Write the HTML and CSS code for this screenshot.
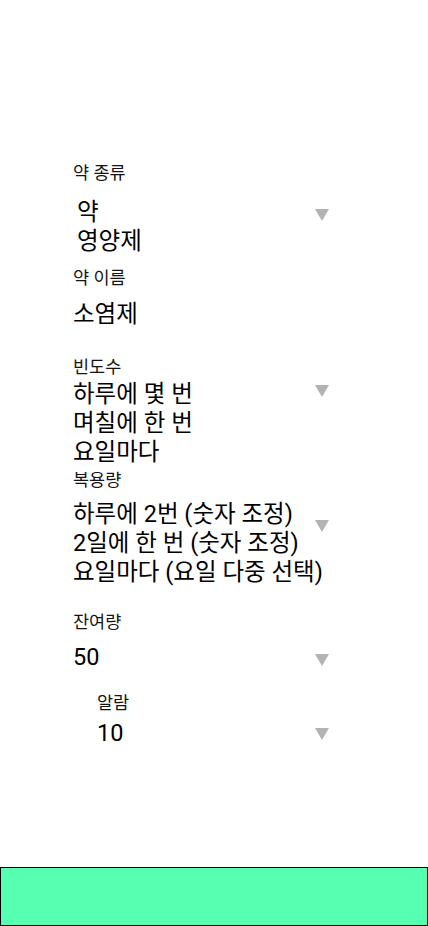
FILE: index.html
```html
<!DOCTYPE html>
<html lang="ko">
<head>
<meta charset="utf-8">
<title>약 등록</title>
<link rel="stylesheet" href="styles.css">
</head>
<body>
<div class="page">
  <form class="form">
    <div class="label label-first">약 종류</div>
    <div class="row row-kind">
      <div class="options options-indent">
        <div>약</div>
        <div>영양제</div>
      </div>
      <span class="arrow arrow-kind"></span>
    </div>

    <div class="label label-name">약 이름</div>
    <div class="row row-name">
      <div class="options"><div>소염제</div></div>
    </div>

    <div class="label label-freq">빈도수</div>
    <div class="row row-freq">
      <div class="options">
        <div>하루에 몇 번</div>
        <div>며칠에 한 번</div>
        <div>요일마다</div>
      </div>
      <span class="arrow arrow-freq"></span>
    </div>

    <div class="label label-dose">복용량</div>
    <div class="row row-dose">
      <div class="options">
        <div>하루에 2번 (숫자 조정)</div>
        <div>2일에 한 번 (숫자 조정)</div>
        <div>요일마다 (요일 다중 선택)</div>
      </div>
      <span class="arrow arrow-dose"></span>
    </div>

    <div class="label label-left">잔여량</div>
    <div class="row row-left">
      <div class="options"><div>50</div></div>
      <span class="arrow arrow-num"></span>
    </div>

    <div class="alarm">
      <div class="label label-alarm">알람</div>
      <div class="row row-alarm">
        <div class="options"><div>10</div></div>
        <span class="arrow arrow-num"></span>
      </div>
    </div>
  </form>
  <button class="save" type="button"></button>
</div>
</body>
</html>
```
FILE: styles.css
```css
* { box-sizing: border-box; }
html, body { margin: 0; padding: 0; background: #fff; }
body {
  font-family: Roboto, "Noto Sans CJK KR", sans-serif;
  color: #000;
}
.page {
  width: 428px;
  height: 926px;
  display: flex;
  flex-direction: column;
}
.form {
  width: 329px;
  padding-left: 73px;
  display: flex;
  flex-direction: column;
}
.label {
  font-size: 17.5px;
  line-height: 22px;
  color: #141414;
}
.label-first { margin-top: 162px; }
.label-name { margin-top: 11px; }
.label-freq { margin-top: 27px; }
.label-dose { margin-top: 2px; }
.label-left { margin-top: 24px; }

.row {
  display: flex;
  align-items: flex-start;
}
.row-kind { margin-top: 14px; }
.row-name { margin-top: 11px; }
.row-freq { margin-top: 2px; }
.row-dose { margin-top: 9px; }
.row-left { margin-top: 10px; }
.row-alarm { margin-top: 5px; }

.options {
  flex: 1 1 0;
  min-width: 0;
  white-space: nowrap;
  font-size: 23.5px;
  line-height: 29px;
  color: #000;
}
.options-indent { padding-left: 4px; }

.alarm {
  margin-top: 20px;
  padding-left: 24px;
}

.arrow {
  width: 0;
  height: 0;
  border-left: 7px solid transparent;
  border-right: 7px solid transparent;
  border-top: 12px solid #b3b3b3;
  flex: none;
}
.arrow-kind { margin-top: 11px; }
.arrow-freq { margin-top: 5px; }
.arrow-dose { margin-top: 20px; }
.arrow-num { margin-top: 11px; }
.row-alarm .arrow-num { margin-top: 9px; }

.save {
  margin-top: auto;
  width: 428px;
  height: 59px;
  background: #57ffb0;
  border: 1px solid #000;
  padding: 0;
}
```
